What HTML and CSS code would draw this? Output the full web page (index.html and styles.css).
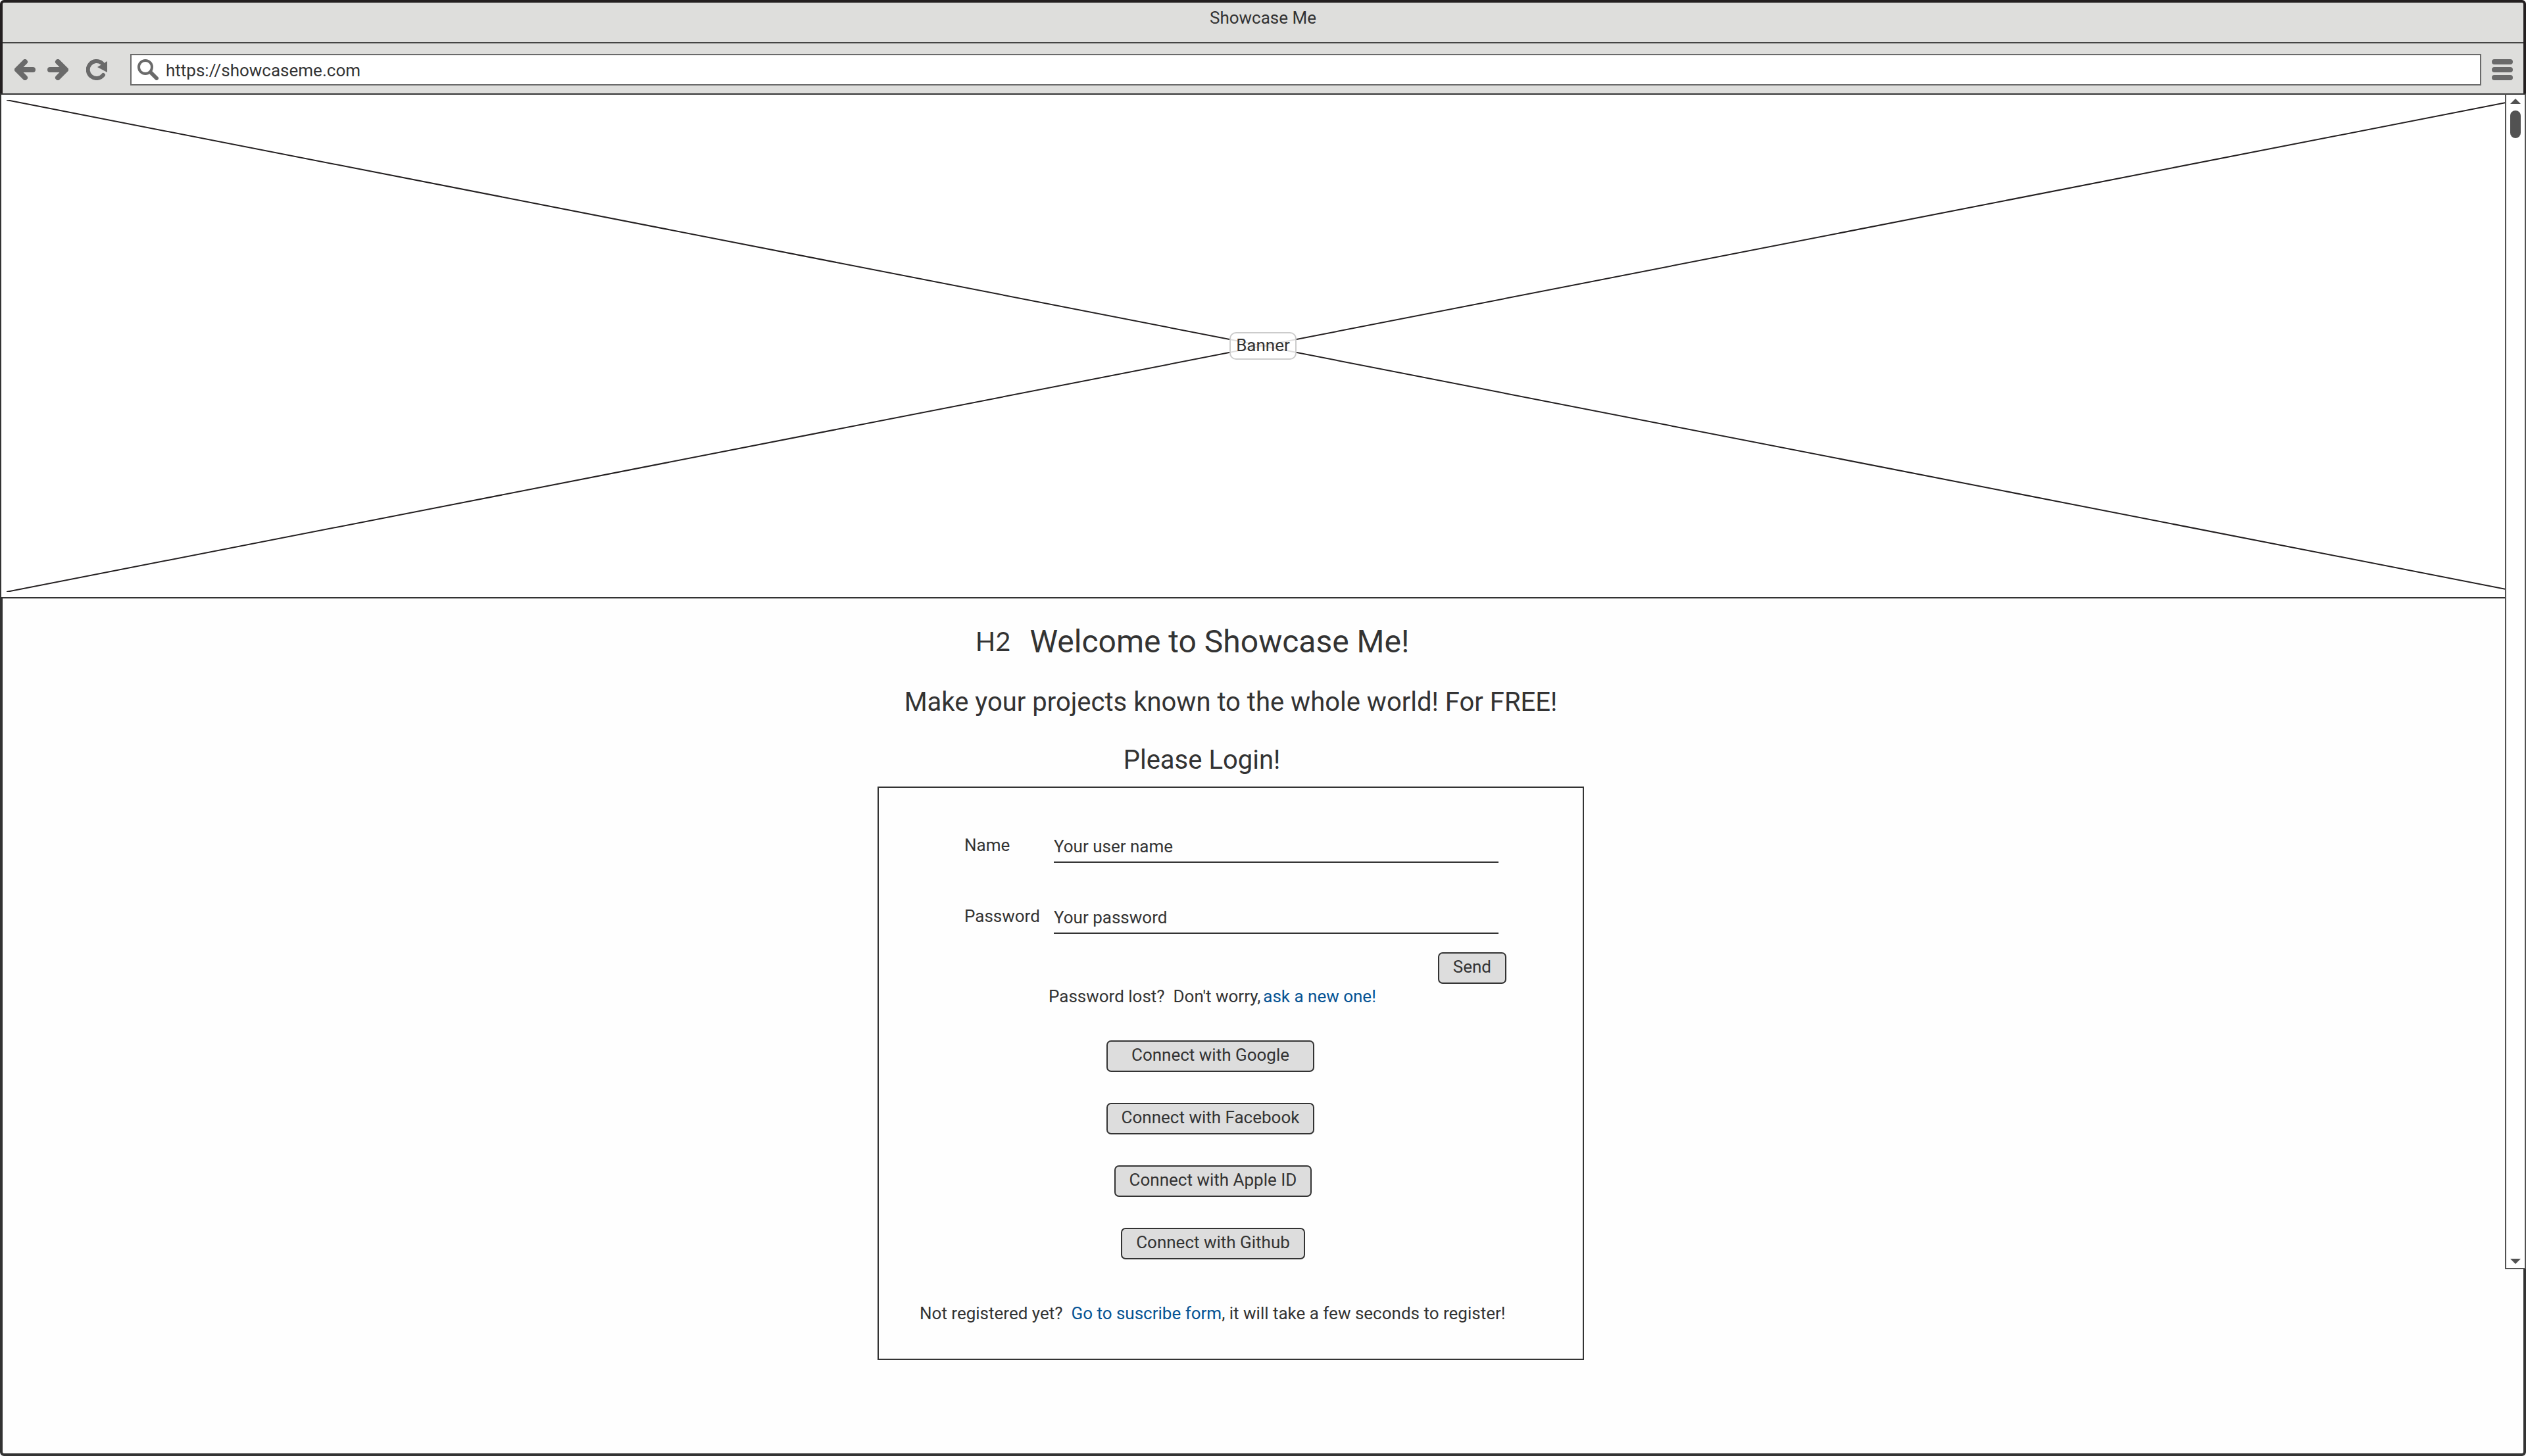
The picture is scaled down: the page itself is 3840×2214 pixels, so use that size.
FILE: index.html
```
<!DOCTYPE html>
<html lang="en">
<head>
<meta charset="utf-8">
<title>Showcase Me</title>
<link rel="stylesheet" href="styles.css">
</head>
<body>
<div class="window">
  <header class="chrome">
    <div class="title">Showcase Me</div>
    <div class="toolbar">
      <button class="tool back" type="button" aria-label="Back">
        <svg viewBox="0 0 32 32"><path d="M16 4 4 16l12 12M5 16h23" fill="none" stroke="currentColor" stroke-width="8" stroke-linecap="round" stroke-linejoin="round"/></svg>
      </button>
      <button class="tool forward" type="button" aria-label="Forward">
        <svg viewBox="0 0 32 32"><path d="M16 4l12 12-12 12M27 16H4" fill="none" stroke="currentColor" stroke-width="8" stroke-linecap="round" stroke-linejoin="round"/></svg>
      </button>
      <button class="tool reload" type="button" aria-label="Reload">
        <svg viewBox="0 0 32 32"><path d="M24 6A13 13 0 1 0 26 24" fill="none" stroke="currentColor" stroke-width="6" stroke-linecap="round"/><path d="M32 3v17L17 12z" fill="currentColor"/></svg>
      </button>
      <label class="address">
        <svg viewBox="0 0 32 32" aria-hidden="true"><circle cx="12" cy="12" r="10" fill="none" stroke="currentColor" stroke-width="4"/><path d="M20 20l9 9" stroke="currentColor" stroke-width="6" stroke-linecap="round"/></svg>
        <input class="url" type="text" aria-label="Address" value="https://showcaseme.com">
      </label>
      <button class="tool menu" type="button" aria-label="Menu">
        <svg viewBox="0 0 32 32"><path d="M4 4h24M4 16h24M4 28h24" stroke="currentColor" stroke-width="8" stroke-linecap="round"/></svg>
      </button>
    </div>
  </header>

  <div class="viewport">
    <div class="banner">
      <svg class="cross" viewBox="0 0 100 100" preserveAspectRatio="none" aria-hidden="true"><path d="M0 0 100 100M0 100 100 0" vector-effect="non-scaling-stroke"/></svg>
      <span class="banner-label">Banner</span>
    </div>

    <main class="content">
      <div class="welcome">
        <span class="level">H2</span>
        <h2 class="heading">Welcome to Showcase Me!</h2>
      </div>
      <p class="tagline">Make your projects known to the whole world! For FREE!</p>
      <h3 class="login-title">Please Login!</h3>

      <form class="card">
        <div class="field">
          <label for="name">Name</label>
          <input id="name" type="text" placeholder="Your user name">
        </div>
        <div class="field">
          <label for="password">Password</label>
          <input id="password" type="password" placeholder="Your password">
        </div>
        <button class="button send" type="button">Send</button>
        <p class="lost"><span>Password lost?&nbsp; Don't worry,</span><a href="#reset">ask a new one!</a></p>
        <div class="providers">
          <button class="button wide" type="button">Connect with Google</button>
          <button class="button wide" type="button">Connect with Facebook</button>
          <button class="button" type="button">Connect with Apple ID</button>
          <button class="button" type="button">Connect with Github</button>
        </div>
        <p class="register">Not registered yet?&nbsp; <a href="#subscribe">Go to suscribe form</a>, it will take a few seconds to register!</p>
      </form>
    </main>

    <div class="scrollbar" aria-hidden="true">
      <svg class="arrow" viewBox="0 0 16 8"><path d="M0 8 8 0l8 8z"/></svg>
      <div class="thumb"></div>
      <svg class="arrow down" viewBox="0 0 16 8"><path d="M0 0h16L8 8z"/></svg>
    </div>
  </div>
</div>
</body>
</html>
```
FILE: styles.css
```
* {
  box-sizing: border-box;
}

body {
  margin: 0;
  background: #fff;
  color: #333;
  font: 26px/32px Roboto, sans-serif;
}

p, h2, h3 {
  margin: 0;
  font-weight: 400;
}

svg {
  display: block;
}

button, input {
  padding: 0;
  border: 0;
  background: none;
  color: inherit;
  font: inherit;
}

a {
  color: #045394;
  text-decoration: none;
}

.window {
  display: flex;
  flex-direction: column;
  min-height: 100vh;
}

/* Browser frame */

.chrome {
  border: 4px solid #231f20;
  border-bottom: 0;
  border-radius: 6px 6px 0 0;
  background: #dededc;
}

.title {
  padding: 7px 0 21px;
  border-bottom: 2px solid #444;
  text-align: center;
}

.toolbar {
  display: flex;
  align-items: center;
  padding: 16px 16px 12px 18px;
  color: #6a6a6a;
}

.tool {
  flex: none;
  width: 32px;
}

.forward {
  margin-left: 18px;
}

.reload {
  margin-left: 27px;
}

.address {
  display: flex;
  flex: 1;
  align-items: center;
  gap: 11px;
  height: 48px;
  margin: 0 16px 0 35px;
  padding-left: 9px;
  border: 2px solid #6a6a6a;
  background: #fff;
}

.address svg {
  flex: none;
  width: 32px;
}

.url {
  flex: 1;
  height: 34px;
  padding-top: 2px;
  color: #333;
}

/* Page area */

.viewport {
  position: relative;
  display: flex;
  flex: 1;
  flex-direction: column;
}

.banner {
  display: grid;
  flex: none;
  grid-template-rows: minmax(0, 1fr);
  place-items: center;
  aspect-ratio: 5;
  min-height: 0;
  padding: 8px;
  border: 2px solid #333;
}

.cross {
  grid-area: 1 / 1;
  width: 100%;
  height: 100%;
  contain: size;
  fill: none;
  stroke: #231f20;
  stroke-width: 2px;
}

.banner-label {
  z-index: 1;
  grid-area: 1 / 1;
  padding: 2px 8px 4px;
  border: 2px solid #ccc;
  border-radius: 10px;
  background: rgb(255 255 255 / 85%);
}

.content {
  display: flex;
  flex: 1;
  flex-direction: column;
  align-items: center;
  padding: 38px 98px 142px 0;
  border: 4px solid #333;
  border-top: 0;
  border-radius: 0 0 6px 6px;
  background: #fefefe;
}

.welcome {
  display: flex;
  align-items: flex-start;
  gap: 29px;
  padding-right: 117px;
}

.level {
  font: 40px/54px Lato, sans-serif;
}

.heading {
  font-size: 48px;
  line-height: 56px;
}

.tagline, .login-title {
  font-size: 40px;
  line-height: 48px;
}

.tagline {
  margin: 40px 0;
}

.login-title {
  padding-right: 88px;
}

.card {
  display: flex;
  flex-direction: column;
  width: 1074px;
  margin-top: 16px;
  padding: 71px 0 53px;
  border: 2px solid #333;
}

.field {
  display: grid;
  grid-template-columns: 136px 1fr;
  align-items: start;
  padding: 0 128px 0 130px;
}

.field + .field {
  margin-top: 65px;
}

.field input {
  height: 43px;
  padding: 2px 0 7px;
  border-bottom: 2px solid #333;
  outline: 0;
}

.field input::placeholder {
  color: #333;
  opacity: 1;
}

.button {
  height: 48px;
  padding: 0 21px 4px;
  border: 2px solid #333;
  border-radius: 7px;
  background: #ddd;
  white-space: nowrap;
}

.send {
  align-self: flex-end;
  margin: 28px 116px 3px;
}

.lost {
  display: flex;
  gap: 4px;
  padding-left: 258px;
}

.providers {
  display: flex;
  flex-direction: column;
  align-items: center;
  gap: 47px;
  margin: 51px 0 66px;
  padding-right: 54px;
}

.wide {
  width: 316px;
  margin-right: 8px;
  padding: 0 0 4px;
}

.register {
  padding-left: 62px;
}

/* Scrollbar lies over the right edge of the page */

.scrollbar {
  position: absolute;
  top: 0;
  right: 0;
  bottom: 284px;
  display: flex;
  flex-direction: column;
  align-items: center;
  gap: 10px;
  width: 32px;
  padding: 6px 0;
  border: 2px solid #525252;
  border-top-color: #333;
  background: #fff;
}

.arrow {
  width: 16px;
  fill: #525252;
}

.down {
  margin-top: auto;
}

.thumb {
  width: 16px;
  height: 42px;
  border-radius: 8px;
  background: #525252;
}
```
